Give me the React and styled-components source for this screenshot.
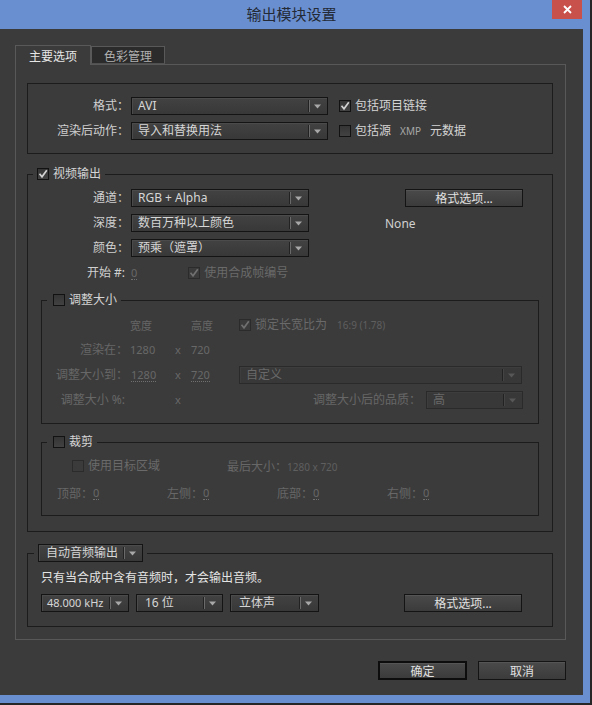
import React from 'react';
import styled, { createGlobalStyle } from 'styled-components';

const GlobalStyle = createGlobalStyle`
  html, body { margin: 0; padding: 0; background: #262626; }
  body {
    font-family: "Noto Sans", "Noto Sans CJK SC", sans-serif;
    font-size: 12px;
    color: #d2d2d2;
  }
  *, *::before, *::after { box-sizing: border-box; }
`;

const Window = styled.div`
  width: 590px;
  height: 703px;
  background: #6a8fd0;
  padding: 0 7px 8px 0;
  display: flex;
  flex-direction: column;
`;

const TitleBar = styled.div`
  height: 29px;
  flex: none;
  display: grid;
  grid-template-columns: 1fr auto 1fr;
  align-items: start;
`;

const Title = styled.div`
  grid-column: 2;
  line-height: 28px;
  font-size: 15px;
  color: #232a35;
  font-family: "Noto Sans CJK SC", sans-serif;
`;

const CloseButton = styled.div`
  grid-column: 3;
  justify-self: end;
  width: 30px;
  height: 19px;
  margin-right: 1px;
  background: #c9514c;
  display: flex;
  align-items: center;
  justify-content: center;
`;

const Body = styled.div`
  flex: 1;
  background: #3b3b3b;
  padding: 16px 17px 0 15px;
  display: flex;
  flex-direction: column;
`;

const TabBar = styled.div`
  display: flex;
  align-items: flex-end;
  height: 19px;
  position: relative;
  z-index: 1;
`;

const Tab = styled.div`
  height: ${p => (p.$active ? 20 : 18)}px;
  width: ${p => (p.$active ? 76 : 74)}px;
  margin-bottom: ${p => (p.$active ? -1 : 0)}px;
  border: 1px solid #595959;
  border-bottom: ${p => (p.$active ? 'none' : '1px solid #505050')};
  background: ${p => (p.$active ? '#3b3b3b' : '#2b2b2b')};
  color: ${p => (p.$active ? '#e6e6e6' : '#b0b0b0')};
  display: flex;
  align-items: center;
  justify-content: center;
  padding-bottom: ${p => (p.$active ? 1 : 0)}px;
  font-family: "Noto Sans CJK SC", sans-serif;
`;

const TabPanel = styled.div`
  border: 1px solid #585858;
  padding: 18px 12px 12px 11px;
  display: flex;
  flex-direction: column;
`;

const Group = styled.div`
  border: 1px solid #1c1c1c;
  padding: 13px 0 13px 0;
  display: grid;
  grid-template-columns: 103px 197px 1fr;
  grid-auto-rows: 18px;
  row-gap: 7px;
  align-items: center;
`;

const Fieldset = styled.fieldset`
  margin: ${p => p.$m};
  padding: 0 0 ${p => p.$pb}px 0;
  border: 1px solid #1c1c1c;
  min-width: 0;
`;

const Legend = styled.legend`
  margin-left: ${p => p.$ml}px;
  padding: 0 4px 0 ${p => p.$pl}px;
  height: ${p => p.$h || 16}px;
`;

const LegendInner = styled.span`
  display: flex;
  align-items: center;
  height: 100%;
  gap: 4px;
  color: #dcdcdc;
`;

const Label = styled.span`
  text-align: right;
  padding-right: ${p => p.$pr ?? 2}px;
  white-space: nowrap;
  color: ${p => (p.$disabled ? '#676767' : '#d0d0d0')};
  font-size: 12px;
  line-height: 18px;
`;

const SelectBox = styled.div`
  width: ${p => p.$w}px;
  height: 18px;
  margin-left: ${p => p.$ml || 0}px;
  flex: none;
  display: flex;
  align-items: center;
  border: 1px solid ${p => (p.$disabled ? '#2a2a2a' : '#141414')};
  background: ${p => (p.$disabled ? '#383838' : 'linear-gradient(#424242, #383838)')};
  box-shadow: inset 1px 1px 0 ${p => (p.$disabled ? '#3d3d3d' : '#4b4b4b')};
  color: ${p => (p.$disabled ? '#696969' : '#d6d6d6')};
`;

const SelectValue = styled.span`
  flex: 1;
  padding-left: ${p => p.$pl ?? 6}px;
  white-space: nowrap;
  overflow: hidden;
  font-size: ${p => p.$fs || 12}px;
  line-height: 16px;
`;

const ArrowZone = styled.span`
  width: 18px;
  height: 100%;
  flex: none;
  display: flex;
  align-items: center;
  gap: 4px;
  color: ${p => (p.$disabled ? '#575757' : '#a8a8a8')};
`;

const Divider = styled.span`
  width: 1px;
  height: 12px;
  background: ${p => (p.$disabled ? '#444' : '#6a6a6a')};
  box-shadow: -1px 0 0 #222;
`;

const Caret = () => (
  <svg width="7" height="5" viewBox="0 0 7 5">
    <path d="M0 0.5 H7 L3.5 4.5 Z" fill="currentColor" />
  </svg>
);

const Select = ({ w, ml, value, disabled, fs, pl }) => (
  <SelectBox $w={w} $ml={ml} $disabled={disabled}>
    <SelectValue $fs={fs} $pl={pl}>{value}</SelectValue>
    <ArrowZone $disabled={disabled}>
      <Divider $disabled={disabled} />
      <Caret />
    </ArrowZone>
  </SelectBox>
);

const CheckRow = styled.span`
  display: flex;
  align-items: center;
  gap: 4px;
  padding-left: ${p => p.$pl || 0}px;
  color: ${p => (p.$disabled ? '#6a6a6a' : '#d4d4d4')};
  white-space: nowrap;
  line-height: 18px;
`;

const CheckBox = styled.span`
  width: 12px;
  height: 12px;
  flex: none;
  border: 1px solid ${p => (p.$disabled ? '#2b2b2b' : '#121212')};
  background: ${p => (p.$disabled ? '#3b3b3b' : 'linear-gradient(#353535, #424242)')};
  display: flex;
  align-items: center;
  justify-content: center;
  color: ${p => (p.$disabled ? '#707070' : '#d2d2d2')};
`;

const Check = ({ checked, disabled, children, pl }) => (
  <CheckRow $disabled={disabled} $pl={pl}>
    <CheckBox $disabled={disabled}>
      {checked && (
        <svg width="10" height="10" viewBox="0 0 10 10">
          <path d="M1.5 4.8 L4 7.8 L8.8 1.2" fill="none" stroke="currentColor" strokeWidth="1.7" />
        </svg>
      )}
    </CheckBox>
    {children}
  </CheckRow>
);

const Small = styled.span`
  font-size: ${p => p.$fs || 10}px;
  color: ${p => p.$c || 'inherit'};
  margin: 0 ${p => p.$mx || 0}px;
`;

const Button = styled.button`
  width: ${p => p.$w}px;
  height: ${p => p.$h || 18}px;
  margin-left: ${p => p.$ml || 0}px;
  padding: 0;
  font: inherit;
  font-size: 12px;
  color: #e0e0e0;
  border: ${p => (p.$default ? '2px solid #0d0d0d' : '1px solid #141414')};
  background: linear-gradient(#4a4a4a, #3b3b3b);
  box-shadow: inset 0 1px 0 #555;
  display: flex;
  align-items: center;
  justify-content: center;
  justify-self: start;
`;

const Plain = styled.span`
  padding-left: ${p => p.$pl || 0}px;
  color: ${p => p.$c || '#d0d0d0'};
  white-space: nowrap;
`;

const VideoGrid = styled.div`
  display: grid;
  grid-template-columns: 103px 178px 1fr;
  grid-auto-rows: 18px;
  row-gap: 7px;
  align-items: center;
  margin-top: 7px;
`;

const InlineCell = styled.div`
  grid-column: ${p => p.$col || 'auto'};
  display: flex;
  align-items: center;
  justify-content: ${p => p.$justify || 'flex-start'};
  padding-left: ${p => p.$pl || 0}px;
  gap: ${p => p.$gap || 0}px;
`;

const Num = styled.span`
  color: #686868;
  font-size: 11px;
  line-height: 13px;
  padding-left: ${p => p.$pl || 0}px;
  border-bottom: 1px dotted ${p => (p.$dotted ? '#707070' : 'transparent')};
`;

const Dim = styled.span`
  color: #666;
  font-size: ${p => p.$fs || 11}px;
  white-space: nowrap;
  padding-left: ${p => p.$pl || 0}px;
`;

const ResizeGrid = styled.div`
  display: grid;
  grid-template-columns: 87px 46px 16px 46px 1fr;
  grid-auto-rows: 18px;
  row-gap: 7px;
  align-items: center;
  padding: 8px 15px 0 0;
`;

const CropRow = styled.div`
  display: flex;
  align-items: center;
  height: 18px;
  padding-left: ${p => p.$pl || 0}px;
  margin-top: ${p => p.$mt || 0}px;
`;

const CropGrid = styled.div`
  display: grid;
  grid-template-columns: repeat(4, 110px);
  height: 18px;
  align-items: center;
  padding-left: 15px;
  margin-top: 9px;
`;

const CropCell = styled.div`
  display: flex;
  align-items: center;
  color: #676767;
`;

const AudioBody = styled.div`
  padding-left: 13px;
`;

const AudioNote = styled.div`
  margin-top: 8px;
  line-height: 16px;
  color: #e4e4e4;
`;

const AudioRow = styled.div`
  margin-top: 8px;
  display: flex;
  align-items: center;
  height: 18px;
`;

const Footer = styled.div`
  margin-top: 21px;
  display: flex;
  justify-content: flex-end;
  gap: 11px;
`;

export default function App() {
  return (
    <>
      <GlobalStyle />
      <Window>
        <TitleBar>
          <Title>输出模块设置</Title>
          <CloseButton>
            <svg width="9" height="9" viewBox="0 0 9 9">
              <path d="M1 1 L8 8 M8 1 L1 8" stroke="#fff" strokeWidth="1.8" />
            </svg>
          </CloseButton>
        </TitleBar>
        <Body>
          <TabBar>
            <Tab $active>主要选项</Tab>
            <Tab>色彩管理</Tab>
          </TabBar>
          <TabPanel>
            <Group>
              <Label>格式：</Label>
              <Select w={197} value="AVI" />
              <Check checked pl={11}>包括项目链接</Check>
              <Label>渲染后动作：</Label>
              <Select w={197} value="导入和替换用法" />
              <Check pl={11}>
                包括源<Small $c="#a8a8a8" $mx={5}>XMP</Small>元数据
              </Check>
            </Group>

            <Fieldset $m="12px 0 0 0" $pb={15}>
              <Legend $ml={5} $pl={4}>
                <LegendInner>
                  <Check checked>视频输出</Check>
                </LegendInner>
              </Legend>
              <VideoGrid>
                <Label>通道：</Label>
                <Select w={178} value="RGB + Alpha" />
                <Button $w={118} $ml={96}>格式选项...</Button>

                <Label>深度：</Label>
                <Select w={178} value="数百万种以上颜色" />
                <Plain $pl={76}>None</Plain>

                <Label>颜色：</Label>
                <Select w={178} value="预乘（遮罩）" />
                <span />

                <Label $pr={6}>开始 #:</Label>
                <InlineCell $col="2 / 4">
                  <Num $dotted>0</Num>
                  <Check checked disabled pl={51}>使用合成帧编号</Check>
                </InlineCell>
              </VideoGrid>

              <Fieldset $m="10px 13px 0 13px" $pb={14}>
                <Legend $ml={5} $pl={6}>
                  <LegendInner>
                    <Check>调整大小</Check>
                  </LegendInner>
                </Legend>
                <ResizeGrid>
                  <span />
                  <Dim $pl={1}>宽度</Dim>
                  <span />
                  <Dim>高度</Dim>
                  <InlineCell $pl={2}>
                    <Check checked disabled>
                      锁定长宽比为<Small $c="#5f5f5f" $mx={6}>16:9 (1.78)</Small>
                    </Check>
                  </InlineCell>

                  <Label $disabled $pr={1}>渲染在：</Label>
                  <Num $pl={1}>1280</Num>
                  <Num>x</Num>
                  <Num>720</Num>
                  <span />

                  <Label $disabled $pr={1}>调整大小到：</Label>
                  <InlineCell $pl={2}><Num $dotted>1280</Num></InlineCell>
                  <Num>x</Num>
                  <InlineCell><Num $dotted>720</Num></InlineCell>
                  <InlineCell $pl={2}>
                    <Select w={283} value="自定义" disabled />
                  </InlineCell>

                  <Label $disabled $pr={4}>调整大小 %:</Label>
                  <span />
                  <Num>x</Num>
                  <span />
                  <InlineCell $justify="flex-end" $gap={5}>
                    <Label $disabled $pr={0}>调整大小后的品质：</Label>
                    <Select w={97} value="高" disabled />
                  </InlineCell>
                </ResizeGrid>
              </Fieldset>

              <Fieldset $m="10px 13px 0 13px" $pb={13}>
                <Legend $ml={5} $pl={6}>
                  <LegendInner>
                    <Check>裁剪</Check>
                  </LegendInner>
                </Legend>
                <CropRow $pl={30} $mt={7}>
                  <Check disabled>使用目标区域</Check>
                  <Plain $pl={67} $c="#676767">
                    最后大小：<Small $fs={10} $c="#5f5f5f">1280 x 720</Small>
                  </Plain>
                </CropRow>
                <CropGrid>
                  <CropCell>顶部：<Num $dotted>0</Num></CropCell>
                  <CropCell>左侧：<Num $dotted>0</Num></CropCell>
                  <CropCell>底部：<Num $dotted>0</Num></CropCell>
                  <CropCell>右侧：<Num $dotted>0</Num></CropCell>
                </CropGrid>
              </Fieldset>
            </Fieldset>

            <Fieldset $m="12px 0 0 0" $pb={14}>
              <Legend $ml={6} $pl={4} $h={18}>
                <LegendInner>
                  <Select w={105} value="自动音频输出" pl={7} />
                </LegendInner>
              </Legend>
              <AudioBody>
                <AudioNote>只有当合成中含有音频时，才会输出音频。</AudioNote>
                <AudioRow>
                  <Select w={88} value="48.000 kHz" fs={11} pl={5} />
                  <Select w={87} ml={7} value="16 位" pl={8} />
                  <Select w={89} ml={7} value="立体声" pl={8} />
                  <Button $w={118} $ml={85}>格式选项...</Button>
                </AudioRow>
              </AudioBody>
            </Fieldset>
          </TabPanel>
          <Footer>
            <Button $w={89} $h={19} $default>确定</Button>
            <Button $w={88} $h={19}>取消</Button>
          </Footer>
        </Body>
      </Window>
    </>
  );
}
